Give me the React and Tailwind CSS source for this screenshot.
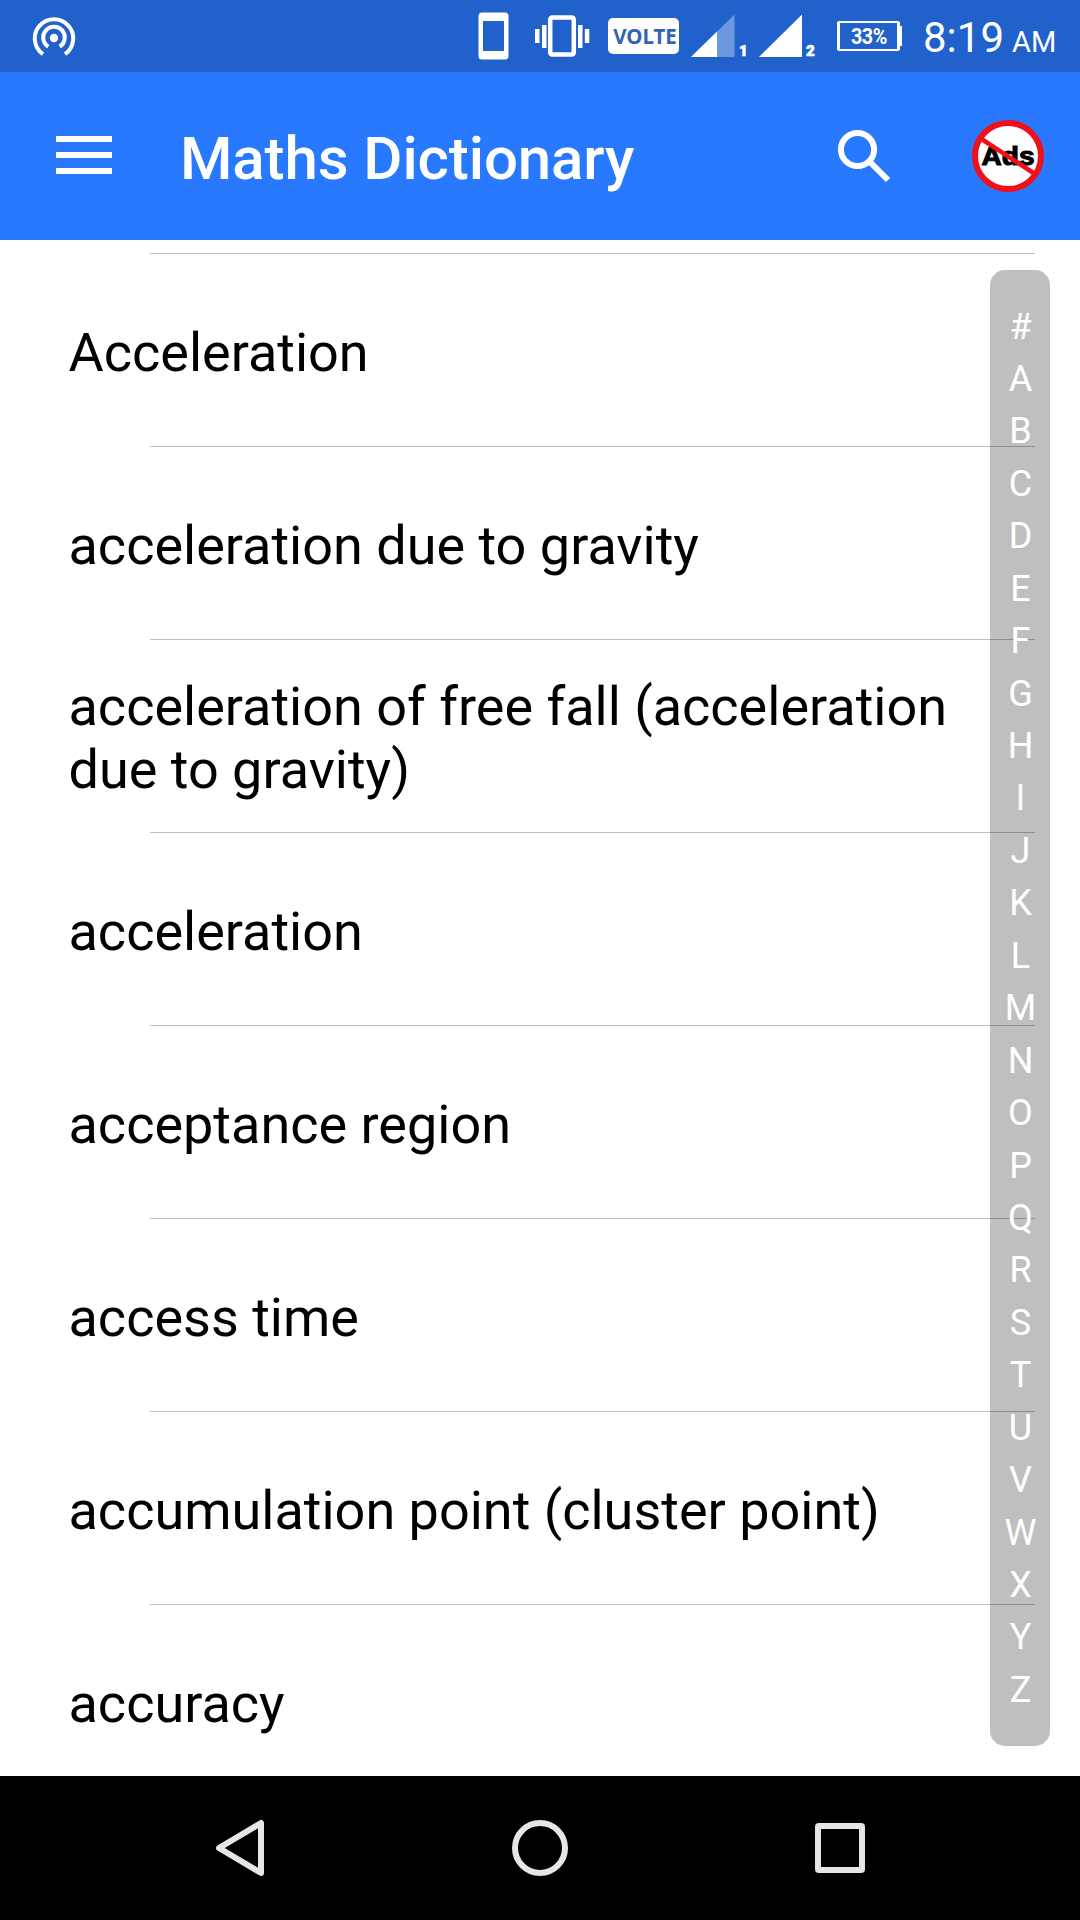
import React from "react";

const words = [
  "Acceleration",
  "acceleration due to gravity",
  "acceleration of free fall (acceleration due to gravity)",
  "acceleration",
  "acceptance region",
  "access time",
  "accumulation point (cluster point)",
  "accuracy",
];

const letters = "#ABCDEFGHIJKLMNOPQRSTUVWXYZ".split("");

function StatusBar() {
  return (
    <div className="flex h-[72px] items-center bg-[#2161cb] pl-8 text-white">
      {/* Hotspot */}
      <svg width="44" height="44" viewBox="0 0 44 44" fill="none" stroke="currentColor" strokeWidth="4">
        <circle cx="22" cy="24" r="4.2" fill="currentColor" stroke="none" />
        <path d="M16.3 32.6A10.8 10.8 0 1 1 27.7 32.6" />
        <path d="M11 40.2A19.2 19.2 0 1 1 33 40.2" />
      </svg>

      {/* Phone */}
      <svg className="ml-[402px]" width="31" height="48" viewBox="0 0 31 48" fill="currentColor">
        <path
          fillRule="evenodd"
          d="M4 .5h23a3.5 3.5 0 0 1 3.5 3.5v40a3.5 3.5 0 0 1-3.5 3.5H4A3.5 3.5 0 0 1 .5 44V4A3.5 3.5 0 0 1 4 .5zM5 9v30h21V9z"
        />
      </svg>

      {/* Vibrate */}
      <svg className="ml-6" width="58" height="42" viewBox="0 0 58 42" fill="currentColor">
        <rect x="2" y="14" width="4.5" height="14" />
        <rect x="9" y="10" width="4.5" height="23" />
        <rect x="17.2" y="2.5" width="23.6" height="37" rx="2" fill="none" stroke="currentColor" strokeWidth="4.5" />
        <rect x="45" y="10" width="4.5" height="23" />
        <rect x="51.8" y="14" width="4.5" height="14" />
      </svg>

      <div className="ml-[17px] flex h-9 w-[71px] items-center justify-center rounded-[5px] bg-white pl-[3px] font-['Noto_Sans'] text-[20.5px] font-bold text-[#3563b4]">
        VOLTE
      </div>

      {/* Sim signals */}
      <svg className="ml-3" width="60" height="52" viewBox="0 -4 60 52" fill="currentColor">
        <path d="M43.5.5V43H0z" opacity=".35" />
        <path d="M26 17.5V43H0z" />
        <text x="48" y="42" fontSize="15" fontWeight="900" fontFamily="Roboto" stroke="currentColor" strokeWidth=".7">1</text>
      </svg>
      <svg className="ml-2" width="60" height="52" viewBox="0 -4 60 52" fill="currentColor">
        <path d="M43 .5V43H0z" />
        <text x="47" y="42" fontSize="15" fontWeight="900" fontFamily="Roboto" stroke="currentColor" strokeWidth=".7">2</text>
      </svg>

      {/* Battery */}
      <div className="ml-[18px] flex items-center">
        <div className="flex h-[30px] w-[63px] items-center justify-center rounded-[2px] border-2 border-r-[3px] border-l-[3px] border-white font-[Roboto] text-[22px] leading-none font-bold tracking-tight">
          <span className="origin-center scale-x-90 pt-px pl-px">33%</span>
        </div>
        <div className="h-5 w-0.5 bg-white" />
      </div>

      <div className="ml-[21px] flex items-baseline pt-1 whitespace-nowrap">
        <span className="text-[42px] leading-none">8:19</span>
        <span className="ml-2 text-[29px] leading-none">AM</span>
      </div>
    </div>
  );
}

function Header() {
  return (
    <header className="flex h-[168px] items-center bg-[#2979ff] pl-14 text-white">
      {/* Menu */}
      <div className="-mt-[3px] flex w-14 flex-col gap-2.5">
        <span className="h-1.5 bg-white" />
        <span className="h-1.5 bg-white" />
        <span className="h-1.5 bg-white" />
      </div>
      <h1 className="mt-1.5 ml-[68px] w-[657px] text-[60px] leading-none font-medium tracking-[-0.1px] whitespace-nowrap">
        Maths Dictionary
      </h1>

      {/* Search */}
      <svg width="54" height="54" viewBox="0 0 54 54" fill="none" stroke="currentColor" strokeWidth="6">
        <circle cx="20.5" cy="20.5" r="16.6" />
        <path d="M33 33L51 51" />
      </svg>

      {/* Remove ads */}
      <svg className="ml-[80px]" width="74" height="74" viewBox="0 0 74 74">
        <circle cx="37" cy="37" r="33" fill="white" stroke="#f0101a" strokeWidth="6" />
        <text
          x="10.5"
          y="46"
          fontSize="25"
          fontWeight="700"
          fontFamily="Liberation Sans"
          textLength="53"
          lengthAdjust="spacingAndGlyphs"
          fill="black"
          stroke="black"
          strokeWidth="1"
        >
          Ads
        </text>
        <path d="M9 19L64 55" stroke="#f0101a" strokeWidth="4.5" />
      </svg>
    </header>
  );
}

function WordList() {
  return (
    <ul className="flex flex-col pt-[13px]">
      {words.map((word) => (
        <li key={word} className="h-[193px] shrink-0">
          <div className="mr-[45px] ml-[150px] h-px bg-[#bebebe]" />
          <div className="flex h-48 items-center pt-1 pr-[110px] pl-[68.5px] text-[54px] leading-[63px] text-black">
            {word}
          </div>
        </li>
      ))}
    </ul>
  );
}

function AlphabetIndex() {
  return (
    <div className="absolute top-[30px] right-[30px] flex h-[1476px] w-[60px] flex-col items-center rounded-[15px] bg-black/25 pt-[30.5px] pl-px text-[36px] text-white">
      {letters.map((letter) => (
        <span key={letter} className="h-[52.44px] leading-[52.44px]">
          {letter}
        </span>
      ))}
    </div>
  );
}

function NavBar() {
  return (
    <nav className="flex h-36 items-center bg-black text-[#e6e6e6]">
      <svg className="ml-[214px]" width="52" height="60" viewBox="0 0 52 60" fill="none" stroke="currentColor" strokeWidth="6" strokeLinejoin="round">
        <path d="M47 5V55L5 30z" />
      </svg>
      <svg className="ml-[244px]" width="60" height="60" viewBox="0 0 60 60" fill="none" stroke="currentColor" strokeWidth="6">
        <circle cx="30" cy="30" r="25" />
      </svg>
      <svg className="ml-[243px]" width="54" height="54" viewBox="0 0 54 54" fill="none" stroke="currentColor" strokeWidth="6">
        <rect x="5" y="5" width="44" height="44" rx="1" />
      </svg>
    </nav>
  );
}

function App() {
  return (
    <div className="flex h-[1920px] w-[1080px] flex-col overflow-hidden bg-white font-[Roboto,sans-serif]">
      <StatusBar />
      <Header />
      <main className="relative h-[1536px] overflow-hidden">
        <WordList />
        <AlphabetIndex />
      </main>
      <NavBar />
    </div>
  );
}

export default App;
